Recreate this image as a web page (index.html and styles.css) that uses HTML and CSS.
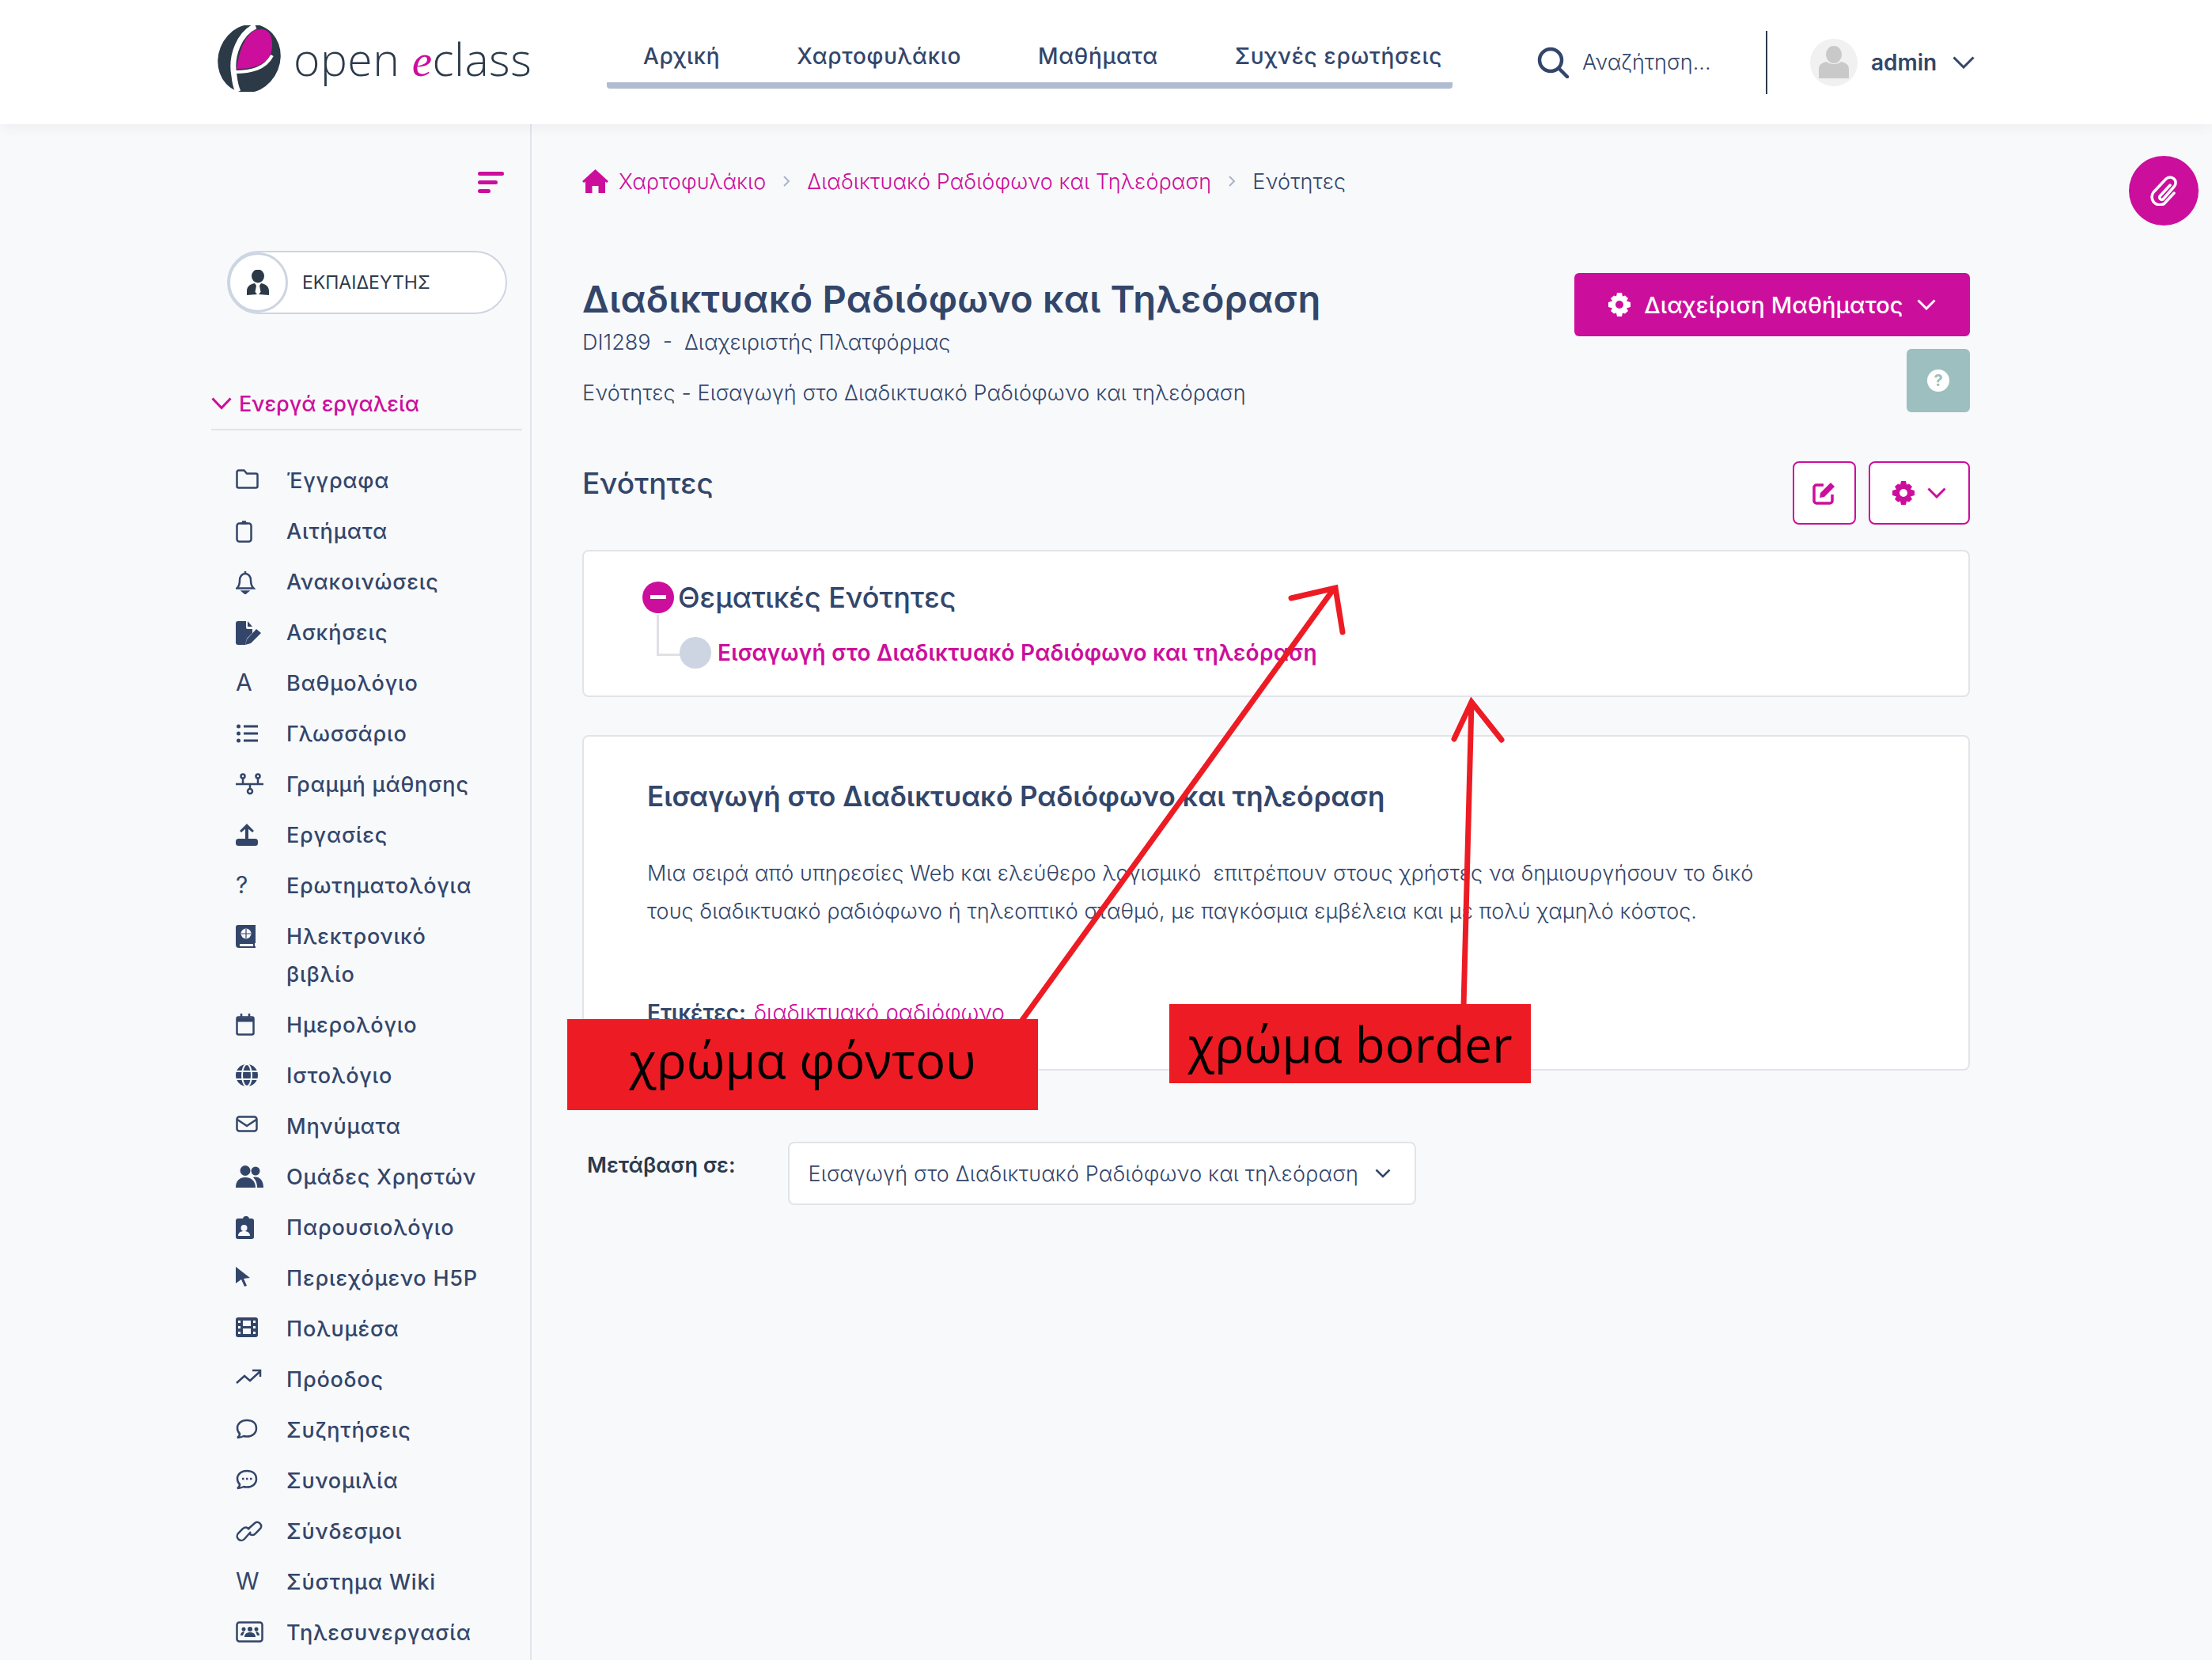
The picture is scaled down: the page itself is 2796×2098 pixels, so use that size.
FILE: index.html
```html
<!DOCTYPE html>
<html lang="el">
  <head>
    <meta charset="UTF-8" />
    <title>Ενότητες</title>
    <link rel="stylesheet" href="styles.css">
  </head>
  <body>
    <header class="topbar">
      <a class="logo">
        <svg class="logo-mark" viewBox="0 0 84 84" width="84" height="84">
          <ellipse cx="42" cy="42" rx="39" ry="44" transform="rotate(22 42 42)" fill="#2c3a47"/>
          <path d="M50 1C30 10 18 38 23 64c1 9 2 14 5 20" fill="none" stroke="#fff" stroke-width="7"/>
          <path d="M50 6c14-4 21 3 21 19 0 9-3 14-7 19-8 8-22 11-38 11C29 34 36 12 50 6z" fill="#cc0e9c"/>
          <path d="M24 59c20 0 38-4 47-21" fill="none" stroke="#fff" stroke-width="4"/>
        </svg>
        <span class="logo-text">open <i>e</i>class</span>
      </a>
      <nav class="topnav">
        <a>Αρχική</a>
        <a>Χαρτοφυλάκιο</a>
        <a>Μαθήματα</a>
        <a>Συχνές ερωτήσεις</a>
      </nav>
      <div class="search">
        <svg width="40" height="40" viewBox="0 0 40 40" fill="none" stroke="currentColor" stroke-width="4.5" stroke-linecap="round"><circle cx="17" cy="17" r="14"/><path d="M27 27l11 11"/></svg>
        <span>Αναζήτηση...</span>
      </div>
      <div class="user">
        <svg class="avatar" width="60" height="60" viewBox="0 0 60 60"><circle cx="30" cy="30" r="30" fill="#f1f1f1"/><ellipse cx="30" cy="20" rx="10" ry="11" fill="#c9c9c9"/><path d="M11 50V38c0-6 5-8 10-9 3 4 15 4 18 0 5 1 10 3 10 9v12z" fill="#c9c9c9"/></svg>
        <b>admin</b>
        <svg width="28" height="16" viewBox="0 0 28 16" fill="none" stroke="currentColor" stroke-width="3"><path d="M1.5 1.5L14 14 26.5 1.5"/></svg>
      </div>
    </header>

    <div class="page">
      <aside class="sidebar">
        <div class="toggle">
          <svg width="33" height="27" viewBox="0 0 33 27" fill="currentColor"><rect width="33" height="5" rx="2.5"/><rect y="11" width="25" height="5" rx="2.5"/><rect y="22" width="16" height="5" rx="2.5"/></svg>
        </div>
        <div class="role">
          <span class="role-icon">
            <svg width="28" height="32" viewBox="0 0 28 32" fill="#2c3a47"><ellipse cx="14" cy="8" rx="8" ry="8.5"/><path d="M0 32v-5c0-6 4-9 10-10l2 3-1.5 8 2.5 3zM28 32v-5c0-6-4-9-10-10l-2 3 1.5 8-2.5 3z"/></svg>
          </span>
          <span>ΕΚΠΑΙΔΕΥΤΗΣ</span>
        </div>
        <div class="tools-head">
          <svg width="26" height="16" viewBox="0 0 26 16" fill="none" stroke="currentColor" stroke-width="3"><path d="M1.5 1.5L13 13.5 24.5 1.5"/></svg>
          <span>Ενεργά εργαλεία</span>
        </div>
        <ul class="tools">
          <li><svg class="ico line" viewBox="0 0 36 30"><path d="M1.5 3.5a2 2 0 0 1 2-2h7l3.5 4h11.5a2 2 0 0 1 2 2v14a2 2 0 0 1-2 2h-22a2 2 0 0 1-2-2z"/></svg>Έγγραφα</li>
          <li><svg class="ico line" viewBox="0 0 36 30"><rect x="1.5" y="4.5" width="18" height="23" rx="3"/><path d="M6 4.5h9M8 2.5h5" /></svg>Αιτήματα</li>
          <li><svg class="ico line" viewBox="0 0 36 30"><path d="M1.5 22.5c3-3 3.5-5 3.5-10 0-5 3-8.5 7-8.5s7 3.5 7 8.5c0 5 .5 7 3.5 10z"/><path d="M12 1v3M9 26.5h6l-3 2.5z"/></svg>Ανακοινώσεις</li>
          <li><svg class="ico" viewBox="0 0 36 30"><path d="M0 3a3 3 0 0 1 3-3h10v8a2 2 0 0 0 2 2h6v5l-7 7-2 8H3a3 3 0 0 1-3-3z"/><path d="M15 0l6 7h-6zM26 10l6 5-13 13-7 2 2-7z"/></svg>Ασκήσεις</li>
          <li><span class="ico glyph">A</span>Βαθμολόγιο</li>
          <li><svg class="ico" viewBox="0 0 36 30"><circle cx="3.5" cy="5" r="2.5"/><circle cx="3.5" cy="14" r="2.5"/><circle cx="3.5" cy="23" r="2.5"/><rect x="10" y="3.5" width="18" height="3"/><rect x="10" y="12.5" width="18" height="3"/><rect x="10" y="21.5" width="18" height="3"/></svg>Γλωσσάριο</li>
          <li><svg class="ico line" viewBox="0 0 36 30"><path d="M0 14h35M9 6v8M28 6v8M18 14v6"/><circle cx="9" cy="4" r="2.5"/><circle cx="28" cy="4" r="2.5"/><circle cx="18" cy="23" r="3"/></svg>Γραμμή μάθησης</li>
          <li><svg class="ico" viewBox="0 0 36 30"><rect y="19" width="28" height="9" rx="3.5"/><path d="M12 3h4v17h-4z"/><path d="M14 0l9 9-2 2-7-6-7 6-2-2z"/></svg>Εργασίες</li>
          <li><span class="ico glyph">?</span>Ερωτηματολόγια</li>
          <li><svg class="ico" viewBox="0 0 36 30"><path d="M3 0h22v23h-1v4h1v2H4a4 4 0 0 1-4-4V3a3 3 0 0 1 3-3zM5 24v3h17v-3z"/><circle cx="13" cy="11" r="6.5" fill="#f8f9fb"/><path d="M13 5v12M7 11h12" stroke="#33466a" stroke-width="1.2"/></svg>Ηλεκτρονικό βιβλίο</li>
          <li><svg class="ico line" viewBox="0 0 36 30"><rect x="1.5" y="4.5" width="21" height="22" rx="2"/><path d="M1.5 8h21" stroke-width="5"/><path d="M7 0v4M17 0v4"/></svg>Ημερολόγιο</li>
          <li><svg class="ico" viewBox="0 0 36 30"><circle cx="14" cy="14" r="14"/><g fill="none" stroke="#f8f9fb" stroke-width="2"><ellipse cx="14" cy="14" rx="6" ry="14"/><path d="M0 9h28M0 19h28"/></g></svg>Ιστολόγιο</li>
          <li><svg class="ico line" viewBox="0 0 36 30"><rect x="1.5" y="2.5" width="25" height="18" rx="3"/><path d="M2 6l12 8 12-8"/></svg>Μηνύματα</li>
          <li><svg class="ico" viewBox="0 0 36 30"><circle cx="12" cy="6.5" r="6.5"/><circle cx="25" cy="7" r="5.5"/><path d="M0 28c0-9 5-13 12-13s13 4 13 13zM27 28c0-6-2-10-5-13 8-2 13 4 13 13z"/></svg>Ομάδες Χρηστών</li>
          <li><svg class="ico" viewBox="0 0 36 30"><path d="M3 3h6a4 4 0 0 1 4-3 4 4 0 0 1 4 3h3a3 3 0 0 1 3 3v20a3 3 0 0 1-3 3H3a3 3 0 0 1-3-3V6a3 3 0 0 1 3-3z"/><g fill="#f8f9fb"><circle cx="10.5" cy="15" r="4"/><path d="M3 25c0-4 3-6 7.5-6s7.5 2 7.5 6z"/></g></svg>Παρουσιολόγιο</li>
          <li><svg class="ico" viewBox="0 0 36 30"><path d="M0 0l18 14-8 1 4 9-3 1-4-9-7 5z"/></svg>Περιεχόμενο H5P</li>
          <li><svg class="ico" viewBox="0 0 36 30"><path fill-rule="evenodd" d="M3 0h22a3 3 0 0 1 3 3v19a3 3 0 0 1-3 3H3a3 3 0 0 1-3-3V3a3 3 0 0 1 3-3zm0 4v3h3V4zm0 7v3h3v-3zm0 7v3h3v-3zM22 4v3h3V4zm0 7v3h3v-3zm0 7v3h3v-3zM9 4v7h10V4zm0 10v7h10v-7z"/></svg>Πολυμέσα</li>
          <li><svg class="ico line" viewBox="0 0 36 30"><path d="M1 19l10-9 7 6 13-12M21 3h10v8"/></svg>Πρόοδος</li>
          <li><svg class="ico line" viewBox="0 0 36 30"><path d="M14 2C7 2 2 6 2 12c0 3 1 5 3 7 0 2-1 4-3 5 3 0 6-1 8-2 1 .3 3 .5 4 .5 7 0 12-4 12-10.5S21 2 14 2z"/></svg>Συζητήσεις</li>
          <li><svg class="ico line" viewBox="0 0 36 30"><path d="M14 2C7 2 2 6 2 12c0 3 1 5 3 7 0 2-1 4-3 5 3 0 6-1 8-2 1 .3 3 .5 4 .5 7 0 12-4 12-10.5S21 2 14 2z"/><path d="M8 12h2.5M13 12h2.5M18 12h2.5"/></svg>Συνομιλία</li>
          <li><svg class="ico line" viewBox="0 0 36 30"><path d="M15 12l9-8a5 5 0 0 1 7 7l-6 6a5 5 0 0 1-8 0"/><path d="M19 15l-8 9a5 5 0 0 1-8-7l6-6a5 5 0 0 1 8 1"/></svg>Σύνδεσμοι</li>
          <li><span class="ico glyph">W</span>Σύστημα Wiki</li>
          <li><svg class="ico" viewBox="0 0 36 30"><rect x="1.5" y="1.5" width="32" height="24" rx="3" fill="none" stroke="currentColor" stroke-width="2.5"/><circle cx="18" cy="10" r="3"/><circle cx="10" cy="10" r="2.5"/><circle cx="26" cy="10" r="2.5"/><path d="M11 20c0-4 3-6 7-6s7 2 7 6zM6 18c0-3 2-5 5-5l-2 5zM30 18c0-3-2-5-5-5l2 5z"/></svg>Τηλεσυνεργασία</li>
        </ul>
      </aside>

      <main class="content">
        <div class="crumbs">
          <svg width="33" height="30" viewBox="0 0 33 30" fill="currentColor"><path d="M16.5 0L33 15l-2 2-2-1.5V30h-8.5v-9h-8v9H4V15.5L2 17l-2-2z"/></svg>
          <a>Χαρτοφυλάκιο</a>
          <svg class="sep" width="10" height="14" viewBox="0 0 10 14" fill="none" stroke="#a9b4c6" stroke-width="2"><path d="M2 1l6 6-6 6"/></svg>
          <a>Διαδικτυακό Ραδιόφωνο και Τηλεόραση</a>
          <svg class="sep" width="10" height="14" viewBox="0 0 10 14" fill="none" stroke="#a9b4c6" stroke-width="2"><path d="M2 1l6 6-6 6"/></svg>
          <span>Ενότητες</span>
        </div>

        <div class="course-head">
          <div>
            <h1>Διαδικτυακό Ραδιόφωνο και Τηλεόραση</h1>
            <p class="course-sub">DI1289&nbsp; - &nbsp;Διαχειριστής Πλατφόρμας</p>
            <p class="course-desc">Ενότητες - Εισαγωγή στο Διαδικτυακό Ραδιόφωνο και τηλεόραση</p>
          </div>
          <div class="course-actions">
            <button class="btn-primary">
              <svg class="gear" width="28" height="30" viewBox="0 0 28 30"><use href="#gear"/></svg>
              Διαχείριση Μαθήματος
              <svg width="24" height="14" viewBox="0 0 24 14" fill="none" stroke="currentColor" stroke-width="3"><path d="M1.5 1.5L12 12 22.5 1.5"/></svg>
            </button>
            <button class="btn-help">
              <svg width="28" height="28" viewBox="0 0 28 28"><circle cx="14" cy="14" r="14" fill="#fff"/></svg>
              <span>?</span>
            </button>
          </div>
        </div>

        <div class="section-head">
          <h2>Ενότητες</h2>
          <div class="section-actions">
            <button class="btn-outline btn-edit">
              <svg width="30" height="30" viewBox="0 0 30 30" fill="none" stroke="currentColor" stroke-width="3.5"><path d="M14 5H5a3 3 0 0 0-3 3v17a3 3 0 0 0 3 3h17a3 3 0 0 0 3-3v-8"/><path d="M9 21l1-6L23 2l5 5-13 13z" fill="currentColor" stroke="none"/></svg>
            </button>
            <button class="btn-outline btn-tools">
              <svg width="28" height="30" viewBox="0 0 28 30"><use href="#gear"/></svg>
              <svg width="24" height="14" viewBox="0 0 24 14" fill="none" stroke="currentColor" stroke-width="3"><path d="M1.5 1.5L12 12 22.5 1.5"/></svg>
            </button>
          </div>
        </div>

        <section class="card toc">
          <div class="toc-title">
            <span class="toc-minus"></span>
            <span>Θεματικές Ενότητες</span>
          </div>
          <div class="toc-item">
            <span class="toc-dot"></span>
            <a>Εισαγωγή στο Διαδικτυακό Ραδιόφωνο και τηλεόραση</a>
          </div>
        </section>

        <section class="card unit">
          <h3>Εισαγωγή στο Διαδικτυακό Ραδιόφωνο και τηλεόραση</h3>
          <p>Μια σειρά από υπηρεσίες Web και ελεύθερο λογισμικό&nbsp; επιτρέπουν στους χρήστες να δημιουργήσουν το δικό τους διαδικτυακό ραδιόφωνο ή τηλεοπτικό σταθμό, με παγκόσμια εμβέλεια και με πολύ χαμηλό κόστος.</p>
          <div class="tags"><b>Ετικέτες:</b> <a>διαδικτυακό ραδιόφωνο</a></div>
        </section>

        <div class="jump">
          <label>Μετάβαση σε:</label>
          <div class="select">
            <span>Εισαγωγή στο Διαδικτυακό Ραδιόφωνο και τηλεόραση</span>
            <svg width="20" height="12" viewBox="0 0 20 12" fill="none" stroke="currentColor" stroke-width="2.5"><path d="M1.5 1.5L10 10l8.5-8.5"/></svg>
          </div>
        </div>
      </main>
    </div>

    <button class="fab">
      <svg width="38" height="38" viewBox="0 0 38 38" fill="none" stroke="#fff" stroke-width="3.5" stroke-linecap="round"><path d="M27 12L14 26a3 3 0 0 0 4 4l14-16a7 7 0 0 0-10-10L6 21a10 10 0 0 0 14 14l12-13"/></svg>
    </button>

    <!-- annotations drawn on top of the screenshot -->
    <svg class="arrows" width="2796" height="2098" viewBox="0 0 2796 2098" fill="none" stroke="#ed1c24" stroke-width="7" stroke-linecap="round">
      <path d="M1290 1292L1686 744M1632 756l56-13 9 56"/>
      <path d="M1850 1272L1860 888M1838 934l22-47 38 48"/>
    </svg>
    <div class="note note-bg">χρώμα φόντου</div>
    <div class="note note-border">χρώμα border</div>

    <svg class="defs" width="0" height="0">
      <symbol id="gear" viewBox="0 0 28 30"><path fill="currentColor" fill-rule="evenodd" d="M11 0h6l1 4.5 3-1 4 3.5-2 3.5 5 1.5v6l-5 1.5 2 3.5-4 3.5-3-1-1 4.5h-6l-1-4.5-3 1-4-3.5 2-3.5-5-1.5v-6l5-1.5-2-3.5 4-3.5 3 1zM14 10a5 5 0 1 0 0 10 5 5 0 0 0 0-10z"/></symbol>
    </svg>
  </body>
</html>
```

FILE: styles.css
```css
:root {
  --pink: #cc0e9c;
  --navy: #33466a;
  --dark: #2c3a4b;
  --bg: #f8f9fb;
  --line: #e1e4ea;
}

* {
  box-sizing: border-box;
}

html,
body {
  height: 2098px;
  overflow: hidden;
}

body {
  position: relative;
  margin: 0;
  background-color: var(--bg);
  color: var(--navy);
  font-family: "Inter", "Noto Sans", sans-serif;
  font-size: 26px;
}

h1,
h2,
h3,
p {
  margin: 0;
}

button {
  font-family: inherit;
  cursor: pointer;
}

/* top bar */
.topbar {
  display: flex;
  align-items: center;
  height: 157px;
  padding-left: 273px;
  background-color: white;
  box-shadow: 0 4px 14px rgba(60, 70, 90, 0.06);
  position: relative;
}

.logo {
  display: flex;
  align-items: center;
  width: 494px;
  margin-top: -10px;
}

.logo-text {
  margin-left: 14px;
  font-family: "Open Sans", sans-serif;
  font-weight: 300;
  font-size: 57px;
  color: var(--dark);
  letter-spacing: 0.5px;
}

.logo-text i {
  font-family: "Liberation Serif", serif;
  color: var(--pink);
}

.topnav {
  display: flex;
  gap: 97px;
  width: 1069px;
  height: 113px;
  padding: 52px 0 0 46px;
  border-bottom: 8px solid #b0bcd0;
  border-radius: 0 0 4px 4px;
  margin-top: -1px;
  align-self: flex-start;
  font-size: 28px;
  font-weight: 500;
  line-height: 40px;
  letter-spacing: 0.7px;
}

.search {
  display: flex;
  align-items: center;
  gap: 17px;
  width: 289px;
  margin-left: 107px;
  font-size: 27px;
  font-weight: 300;
}

.user {
  display: flex;
  align-items: center;
  height: 80px;
  padding-left: 54px;
  border-left: 2px solid var(--dark);
  font-size: 28px;
}

.user b {
  margin: 0 20px 0 17px;
  font-weight: 600;
}

/* sidebar */
.page {
  display: flex;
  height: 1941px;
}

.sidebar {
  flex: none;
  width: 672px;
  padding: 60px 10px 0 267px;
  border-right: 2px solid var(--line);
}

.toggle {
  display: flex;
  justify-content: flex-end;
  padding-right: 23px;
  color: var(--pink);
}

.role {
  display: flex;
  align-items: center;
  gap: 18px;
  width: 354px;
  height: 80px;
  margin: 73px 0 0 20px;
  border: 2px solid #cdd5e2;
  border-radius: 40px;
  background-color: white;
  font-size: 23px;
  color: var(--dark);
}

.role-icon {
  display: flex;
  align-items: center;
  justify-content: center;
  width: 76px;
  height: 76px;
  margin-left: -1px;
  border: 3px solid #cdd5e2;
  border-radius: 50%;
}

.tools-head {
  display: flex;
  align-items: center;
  gap: 9px;
  height: 60px;
  margin-top: 87px;
  padding-bottom: 6px;
  border-bottom: 2px solid var(--line);
  color: var(--pink);
  font-size: 27px;
  font-weight: 500;
}

.tools {
  margin: 0;
  padding: 32px 0 0;
  list-style: none;
}

.tools li {
  display: flex;
  width: 310px;
  margin-left: 31px;
  padding: 8px 0;
  line-height: 48px;
  font-size: 27px;
  font-weight: 500;
  letter-spacing: 0.8px;
  padding-left: 64px;
  position: relative;
}

.ico {
  position: absolute;
  left: 0;
  top: 17px;
  width: 36px;
  height: 30px;
  fill: currentColor;
}

.ico.line {
  fill: none;
  stroke: currentColor;
  stroke-width: 2.5;
}

.ico.glyph {
  top: 8px;
  line-height: 44px;
  font-size: 30px;
  font-weight: 400;
}

/* main column */
.content {
  flex: 1;
  padding: 52px 306px 0 64px;
}

.crumbs {
  display: flex;
  align-items: center;
  gap: 13px;
  height: 40px;
  font-weight: 300;
  font-size: 27px;
  letter-spacing: 0.1px;
  color: var(--pink);
}

.crumbs span {
  color: var(--navy);
}

.crumbs .sep {
  margin: 0 8px;
}

.course-head {
  display: flex;
  justify-content: space-between;
  margin-top: 96px;
}

h1 {
  margin-top: 3px;
  font-size: 47px;
  font-weight: 600;
  line-height: 60px;
  letter-spacing: 0.25px;
}

.course-sub {
  margin-top: 7px;
  font-size: 27px;
  font-weight: 300;
  line-height: 36px;
}

.course-desc {
  margin-top: 28px;
  font-size: 27px;
  font-weight: 300;
  line-height: 36px;
  letter-spacing: 0.1px;
}

.course-actions {
  display: flex;
  flex-direction: column;
  align-items: flex-end;
  gap: 16px;
}

.btn-primary {
  display: flex;
  align-items: center;
  justify-content: center;
  gap: 17px;
  width: 500px;
  height: 80px;
  border: none;
  border-radius: 6px;
  background-color: var(--pink);
  color: white;
  font-size: 29px;
  font-weight: 500;
  letter-spacing: 0.1px;
}

.btn-help {
  position: relative;
  display: flex;
  align-items: center;
  justify-content: center;
  width: 80px;
  height: 80px;
  border: none;
  border-radius: 6px;
  background-color: #9dbfc0;
}

.btn-help span {
  position: absolute;
  color: #9dbfc0;
  font-size: 20px;
  font-weight: 700;
}

.section-head {
  display: flex;
  justify-content: space-between;
  margin-top: 62px;
}

h2 {
  font-size: 37px;
  font-weight: 500;
  line-height: 56px;
}

.section-actions {
  display: flex;
  gap: 16px;
}

.btn-outline {
  display: flex;
  align-items: center;
  justify-content: center;
  height: 80px;
  border: 2px solid var(--pink);
  border-radius: 8px;
  background-color: white;
  color: var(--pink);
}

.btn-edit {
  width: 80px;
}

.btn-tools {
  gap: 16px;
  width: 128px;
}

.card {
  border: 2px solid var(--line);
  border-radius: 8px;
  background-color: white;
}

.toc {
  height: 186px;
  margin-top: 32px;
  padding: 36px 0 0 73px;
}

.toc-title {
  display: flex;
  align-items: center;
  gap: 5px;
  font-size: 36px;
  font-weight: 500;
  line-height: 44px;
}

.toc-minus {
  position: relative;
  width: 40px;
  height: 40px;
  margin-left: 1px;
  border-radius: 50%;
  background-color: var(--pink);
}

.toc-minus::after {
  content: "";
  position: absolute;
  left: 10px;
  top: 17px;
  width: 20px;
  height: 5px;
  background-color: white;
}

.toc-item {
  position: relative;
  display: flex;
  align-items: center;
  gap: 8px;
  height: 40px;
  margin: 28px 0 0 48px;
  color: var(--pink);
  font-size: 28px;
  font-weight: 600;
  letter-spacing: 0.25px;
}

.toc-item::before {
  content: "";
  position: absolute;
  left: -29px;
  top: -28px;
  width: 30px;
  height: 49px;
  border-left: 3px solid #dfe1e5;
  border-bottom: 3px solid #dfe1e5;
}

.toc-dot {
  position: relative;
  width: 40px;
  height: 40px;
  border-radius: 50%;
  background-color: #cdd5e2;
}

.unit {
  height: 424px;
  margin-top: 48px;
  padding: 50px 80px 0;
}

h3 {
  font-size: 35px;
  font-weight: 600;
  line-height: 50px;
}

.unit p {
  width: 1420px;
  margin-top: 49px;
  font-weight: 300;
  font-size: 27px;
  line-height: 48px;
  letter-spacing: 0.05px;
}

.tags {
  margin-top: 84px;
  line-height: 40px;
  font-size: 28px;
}

.tags b {
  font-weight: 600;
}

.tags a {
  margin-left: 2px;
  color: var(--pink);
  font-weight: 300;
}

.jump {
  display: flex;
  align-items: flex-start;
  gap: 66px;
  margin: 90px 0 0 6px;
}

.jump label {
  margin-top: 10px;
  font-size: 27px;
  font-weight: 600;
  line-height: 40px;
  color: var(--dark);
}

.select {
  display: flex;
  align-items: center;
  justify-content: space-between;
  width: 794px;
  height: 80px;
  padding: 0 30px 0 24px;
  border: 2px solid var(--line);
  border-radius: 8px;
  background-color: white;
  font-size: 27px;
  font-weight: 300;
  letter-spacing: 0.15px;
}

.fab {
  position: absolute;
  left: 2691px;
  top: 197px;
  display: flex;
  align-items: center;
  justify-content: center;
  width: 88px;
  height: 88px;
  border: none;
  border-radius: 50%;
  background-color: var(--pink);
}

/* red notes that sit over the page */
.arrows {
  position: absolute;
  left: 0;
  top: 0;
  pointer-events: none;
}

.note {
  position: absolute;
  display: flex;
  align-items: center;
  justify-content: center;
  background-color: #ed1c24;
  color: black;
  font-family: "Open Sans", sans-serif;
  font-size: 63px;
}

.note-bg {
  left: 717px;
  top: 1288px;
  width: 595px;
  height: 115px;
  padding-bottom: 14px;
}

.note-border {
  left: 1478px;
  top: 1269px;
  width: 457px;
  height: 100px;
  font-size: 62px;
}

.defs {
  position: absolute;
}
```
